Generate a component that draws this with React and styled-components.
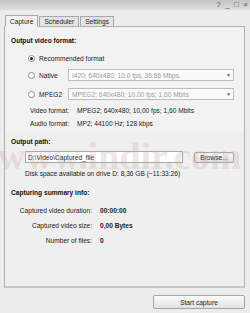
import React from 'react'
import styled, { createGlobalStyle } from 'styled-components'

const Global = createGlobalStyle`
  html, body { margin: 0; padding: 0; background: #ececec; }
  body { font-family: "Liberation Sans", Arial, sans-serif; font-size: 6.6px; color: #222; }
  * { box-sizing: border-box; }
`;

const Window = styled.div`
  position: relative;
  width: 250px;
  height: 313px;
  background: #ececec;
  overflow: hidden;
`;

const TitleBar = styled.div`
  height: 10px;
  background: linear-gradient(#c4c4c4, #dedede);
  display: flex;
  justify-content: flex-end;
  align-items: center;
  gap: 2px;
  padding-right: 1px;
  color: #555;
  font-size: 8px;
`;

const Ctl = styled.span`
  width: 7px;
  text-align: center;
  line-height: 10px;
`;

const Tabs = styled.div`
  display: flex;
  padding: 5px 0 0 5px;
  height: 16px;
  align-items: flex-end;
`;

const Tab = styled.div`
  height: ${p => (p.active ? '12px' : '11px')};
  padding: 0 4px;
  display: flex;
  align-items: center;
  border: 1px solid #a9a9a9;
  border-bottom: ${p => (p.active ? '1px solid #f2f2f2' : '1px solid #a9a9a9')};
  margin-right: 1px;
  margin-bottom: -1px;
  background: ${p => (p.active ? '#f2f2f2' : '#e4e4e4')};
  position: relative;
  z-index: ${p => (p.active ? 2 : 1)};
`;

const Panel = styled.div`
  margin: 0 5px 0 4px;
  height: 262px;
  border: 1px solid #b0b0b0;
  border-bottom: 2px solid #c6c6c6;
  background: #efefef;
  position: relative;
  z-index: 1;
`;

const Section = styled.div`
  padding: ${p => p.pad || '0'};
  background: ${p => p.bg || 'transparent'};
  display: flex;
  flex-direction: column;
`;

const Header = styled.div`
  font-weight: bold;
  height: 10px;
  line-height: 10px;
  padding-left: 6px;
  color: #111;
`;

const Row = styled.div`
  display: flex;
  align-items: center;
  height: ${p => p.h || 10}px;
  margin-top: ${p => p.mt || 0}px;
  padding-left: ${p => p.pl || 0}px;
`;

const Radio = styled.span`
  width: 7px;
  height: 7px;
  border-radius: 50%;
  border: 1px solid #8a8a8a;
  background: #fff;
  margin: 0 4px 0 23px;
  display: flex;
  align-items: center;
  justify-content: center;
  &::after {
    content: '';
    width: 3px;
    height: 3px;
    border-radius: 50%;
    background: ${p => (p.checked ? '#222' : 'transparent')};
  }
`;

const RadioLabel = styled.span`
  width: ${p => p.w || 'auto'};
`;

const Combo = styled.div`
  width: 166px;
  height: 12px;
  border: 1px solid #bdbdbd;
  background: #fafafa;
  color: #9a9a9a;
  display: flex;
  align-items: center;
  justify-content: space-between;
  padding: 0 2px 0 3px;
`;

const Arrow = styled.span`
  color: #666;
  font-size: 5px;
`;

const Label = styled.span`
  width: ${p => p.w}px;
  text-align: ${p => p.align || 'left'};
  flex: none;
`;

const Value = styled.span`
  font-weight: ${p => (p.bold ? 'bold' : 'normal')};
  margin-left: ${p => p.ml || 0}px;
`;

const PathInput = styled.div`
  width: 158px;
  height: 12px;
  border: 1px solid #a8a8a8;
  background: #fff;
  padding-left: 2px;
  display: flex;
  align-items: center;
`;

const Button = styled.div`
  width: ${p => p.w}px;
  height: ${p => p.h}px;
  margin-left: ${p => p.ml || 0}px;
  border: 1px solid #a5a5a5;
  border-radius: 2px;
  background: linear-gradient(#fbfbfb, #e2e2e2);
  display: flex;
  align-items: center;
  justify-content: center;
  color: #222;
`;

const Footer = styled.div`
  display: flex;
  justify-content: flex-end;
  padding: 7px 5px 0 0;
`;

const Watermark = styled.div`
  position: absolute;
  left: -2px;
  top: 134px;
  font-family: "Liberation Serif", serif;
  font-weight: bold;
  font-size: 38px;
  letter-spacing: 0px;
  color: rgba(200, 170, 170, 0.3);
  pointer-events: none;
  z-index: 5;
  white-space: nowrap;
`;

const summary = [
  ['Captured video duration:', '00:00:00', 7],
  ['Captured video size:', '0,00 Bytes', 5],
  ['Number of files:', '0', 5],
]

const App = () => {
  return (
    <>
      <Global />
      <Window>
        <TitleBar>
          <Ctl>?</Ctl>
          <Ctl>_</Ctl>
          <Ctl>□</Ctl>
          <Ctl>×</Ctl>
        </TitleBar>
        <Tabs>
          <Tab active>Capture</Tab>
          <Tab>Scheduler</Tab>
          <Tab>Settings</Tab>
        </Tabs>
        <Panel>
          <Section pad="9px 0 4px 0" bg="#f2f2f2">
            <Header>Output video format:</Header>
            <Row h={12} mt={6}>
              <Radio checked />
              <RadioLabel>Recommended format</RadioLabel>
            </Row>
            <Row h={12} mt={5}>
              <Radio />
              <RadioLabel w="29px">Native</RadioLabel>
              <Combo>
                <span>I420; 640x480; 10.0 fps; 36.86 Mbps.</span>
                <Arrow>▼</Arrow>
              </Combo>
            </Row>
            <Row h={12} mt={7}>
              <Radio />
              <RadioLabel w="29px">MPEG2</RadioLabel>
              <Combo>
                <span>MPEG2; 640x480; 10,00 fps; 1,60 Mbits</span>
                <Arrow>▼</Arrow>
              </Combo>
            </Row>
            <Row mt={5} pl={25}>
              <Label w={47}>Video format:</Label>
              <Value>MPEG2; 640x480; 10,00 fps; 1,60 Mbits</Value>
            </Row>
            <Row mt={3} pl={25}>
              <Label w={47}>Audio format:</Label>
              <Value>MP2; 44100 Hz; 128 kbps</Value>
            </Row>
          </Section>
          <Section pad="5px 0 0 0">
            <Header>Output path:</Header>
            <Row h={12} mt={4} pl={20}>
              <PathInput>D:\Video\Captured_file</PathInput>
              <Button w={40} h={11} ml={11}>Browse...</Button>
            </Row>
            <Row mt={5} pl={20}>
              Disk space available on drive D: 8,36 GB (~11:33:26)
            </Row>
          </Section>
          <Section pad="10px 0 0 0">
            <Header>Capturing summary info:</Header>
            {summary.map(([l, v, mt]) => (
              <Row key={l} mt={mt} pl={6}>
                <Label w={81} align="right">{l}</Label>
                <Value bold ml={8}>{v}</Value>
              </Row>
            ))}
          </Section>
        </Panel>
        <Footer>
          <Button w={92} h={14}>Start capture</Button>
        </Footer>
        <Watermark>www.indir.com</Watermark>
      </Window>
    </>
  )
}

export default App
